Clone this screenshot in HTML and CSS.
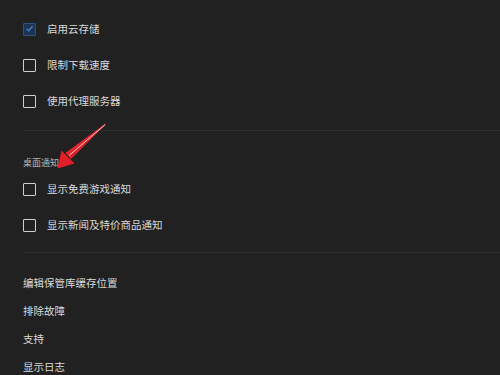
FILE: index.html
```html
<!DOCTYPE html>
<html lang="zh">
<head>
<meta charset="utf-8">
<link rel="stylesheet" href="styles.css">
</head>
<body>
<div class="page">
  <div class="section first">
    <div class="row"><span class="box checked"><svg viewBox="0 0 13 13" width="13" height="13"><path d="M3.5 6.8 L5.6 8.8 L9.6 4.2" fill="none" stroke="#4a7dbb" stroke-width="1.4"/></svg></span><span class="label">启用云存储</span></div>
    <div class="row"><span class="box"></span><span class="label">限制下载速度</span></div>
    <div class="row"><span class="box"></span><span class="label">使用代理服务器</span></div>
  </div>
  <div class="divider d1"></div>
  <div class="section">
    <div class="heading">桌面通知</div>
    <div class="row"><span class="box"></span><span class="label">显示免费游戏通知</span></div>
    <div class="row"><span class="box"></span><span class="label">显示新闻及特价商品通知</span></div>
  </div>
  <div class="divider d2"></div>
  <div class="links">
    <div class="link">编辑保管库缓存位置</div>
    <div class="link">排除故障</div>
    <div class="link">支持</div>
    <div class="link">显示日志</div>
  </div>
  <svg class="arrow" width="500" height="375" viewBox="0 0 500 375">
    <path d="M105.5 124 L71 158.5 L66 153 Z" fill="#e0242c" stroke="#e0242c" stroke-width="1" stroke-linejoin="round"/>
    <path d="M105 124.8 L69 155.5" stroke="#f6c4c6" stroke-width="1" fill="none"/>
    <polygon points="57.5,168.5 61.5,150.5 74.5,163.5" fill="#e31f29"/>
  </svg>
</div>
</body>
</html>
```
FILE: styles.css
```css
html, body {
  margin: 0;
  padding: 0;
  background: #212121;
}
body {
  font-family: "Noto Sans CJK SC", "Noto Sans", sans-serif;
  color: #d9d9d9;
  width: 500px;
  height: 375px;
  overflow: hidden;
}
.page {
  position: relative;
  padding-left: 23px;
}
.section.first {
  padding-top: 11px;
}
.row {
  height: 36px;
  display: flex;
  align-items: center;
  gap: 11px;
}
.box {
  box-sizing: border-box;
  width: 13px;
  height: 13px;
  border: 1.5px solid #cfcfcf;
  border-radius: 1px;
  flex: none;
  display: flex;
}
.box.checked {
  border-color: #2a5488;
  background: #1c3556;
}
.box.checked svg {
  margin: -1.5px;
}
.label {
  font-size: 10.5px;
  line-height: 16px;
  color: #dadada;
}
.divider {
  height: 1px;
  background: #2f2f2f;
}
.d1 {
  margin-top: 11px;
}
.heading {
  margin-top: 24px;
  font-size: 9px;
  line-height: 16px;
  color: #b5b5b5;
}
.d2 {
  margin-top: 9px;
}
.links {
  padding-top: 15px;
}
.link {
  height: 28px;
  display: flex;
  align-items: center;
  font-size: 10.5px;
  color: #dadada;
}
.arrow {
  position: absolute;
  left: 0;
  top: 0;
  pointer-events: none;
}
```
